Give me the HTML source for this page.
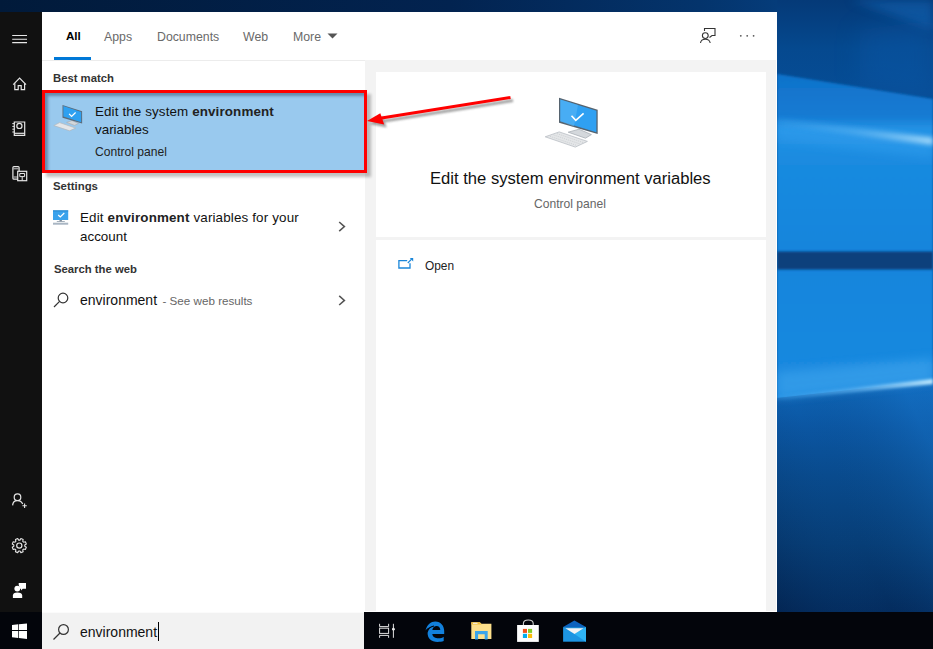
<!DOCTYPE html>
<html><head><meta charset="utf-8">
<style>
*{margin:0;padding:0;box-sizing:border-box}
html,body{width:933px;height:649px;overflow:hidden}
body{position:relative;font-family:"Liberation Sans",sans-serif;background:#0a4f8f}
.a{position:absolute}
#wall{left:0;top:0;width:933px;height:649px;background:linear-gradient(90deg,#011a3a 0px,#022350 450px,#04346c 700px,#053c7a 777px,#0a4a90 933px)}
#side{left:0;top:12px;width:42px;height:600px;background:#111111}
#panel{left:42px;top:12px;width:735px;height:600px;background:#fff}
#hdrline{left:42px;top:60px;width:323px;height:1px;background:#ececec}
#gcol{left:365px;top:60px;width:411px;height:551px;background:#f3f3f3}
#card1{left:376px;top:72px;width:390px;height:165px;background:#fff}
#card2{left:376px;top:240px;width:390px;height:371px;background:#fff}
#taskbar{left:0;top:612px;width:933px;height:37px;background:#03050b}
#search{left:42px;top:612px;width:322px;height:37px;background:#f2f2f2;border-top:1px solid #fbfbfb}
.t{position:absolute;white-space:nowrap;color:#000;line-height:1}
.g{color:#666}
b{font-weight:700;color:#222}
svg{position:absolute;overflow:visible}
</style></head><body>
<div id="wall" class="a"></div>

<svg style="left:777px;top:0" width="156" height="612" viewBox="777 0 156 612">
  <defs>
    <linearGradient id="gTop" x1="0" y1="0" x2="0" y2="1">
      <stop offset="0" stop-color="#053a78"/><stop offset="0.03" stop-color="#053f80"/><stop offset="0.08" stop-color="#05498f"/><stop offset="0.16" stop-color="#064d96"/><stop offset="1" stop-color="#0a56a2"/>
    </linearGradient>
    <linearGradient id="gMid" x1="0" y1="0" x2="0" y2="1">
      <stop offset="0" stop-color="#1072ca"/><stop offset="0.13" stop-color="#157bd3"/><stop offset="0.17" stop-color="#2592e4"/><stop offset="0.26" stop-color="#1a8be0"/><stop offset="0.55" stop-color="#1685dc"/><stop offset="1" stop-color="#1b8ae0"/>
    </linearGradient>
    <linearGradient id="gBot" x1="0" y1="0" x2="0" y2="1">
      <stop offset="0" stop-color="#0e66b8"/><stop offset="0.2" stop-color="#0b56a2"/><stop offset="0.4" stop-color="#094b8e"/><stop offset="0.7" stop-color="#073e77"/><stop offset="1" stop-color="#042c5e"/>
    </linearGradient>
    <linearGradient id="gDiag" x1="0" y1="1" x2="1" y2="0.3"><stop offset="0" stop-color="#021a40" stop-opacity="0.35"/><stop offset="0.5" stop-color="#0a4a8a" stop-opacity="0"/><stop offset="1" stop-color="#1a7ad0" stop-opacity="0.35"/></linearGradient>
    <linearGradient id="gBeam" x1="0" y1="0" x2="1" y2="0">
      <stop offset="0" stop-color="#4aaaf2" stop-opacity="0.2"/><stop offset="0.5" stop-color="#6cbcf6" stop-opacity="0.6"/><stop offset="1" stop-color="#c0eaff" stop-opacity="1"/>
    </linearGradient>
    <filter id="bl1" x="-10%" y="-100%" width="120%" height="300%"><feGaussianBlur stdDeviation="1.8"/></filter>
    <filter id="bl3" x="-10%" y="-100%" width="120%" height="300%"><feGaussianBlur stdDeviation="5"/></filter>
    <filter id="bl4" x="-100%" y="-100%" width="300%" height="300%"><feGaussianBlur stdDeviation="12"/></filter>
    <filter id="bl2" x="-10%" y="-100%" width="120%" height="300%"><feGaussianBlur stdDeviation="2.6"/></filter>
    <filter id="bl0" x="-10%" y="-10%" width="120%" height="120%"><feGaussianBlur stdDeviation="1"/></filter>
  </defs>
  <rect x="777" y="0" width="156" height="612" fill="url(#gTop)"/>
  <path d="M850 0 L933 0 L933 30 Z" fill="#1466b6" opacity="0.55" filter="url(#bl3)"/>
  <path d="M860 30 L933 20 L933 99 L860 87 Z" fill="#0b5cad" opacity="0.35" filter="url(#bl4)"/>
  <path d="M777 74 L933 99 L933 382 L777 399 Z" fill="url(#gMid)" filter="url(#bl0)"/>
  <path d="M777 398 L933 381 L933 612 L777 612 Z" fill="url(#gBot)"/>
  <path d="M777 398 L933 381 L933 612 L777 612 Z" fill="url(#gDiag)"/>
  <path d="M777 121 L933 141 L933 158 L777 140 Z" fill="#36a0f0" opacity="0.45" filter="url(#bl3)"/>
  <path d="M777 119 L933 137.5 L933 145 L777 125 Z" fill="url(#gBeam)" opacity="0.8" filter="url(#bl2)"/>
  <rect x="777" y="251.5" width="156" height="18" fill="#093f7c" filter="url(#bl0)"/>
  <path d="M777 372 L933 358 L933 382 L777 398 Z" fill="#45aaf0" opacity="0.5" filter="url(#bl3)"/>
  <path d="M777 396 L933 379 L933 384 L777 400 Z" fill="url(#gBeam)" filter="url(#bl1)"/>
</svg>
<div id="side" class="a"></div>
<div id="panel" class="a"></div>
<div id="hdrline" class="a"></div>
<div id="gcol" class="a"></div>
<div id="card1" class="a"></div>
<div id="card2" class="a"></div>
<div id="taskbar" class="a"></div>
<div id="search" class="a"></div>


<!-- sidebar icons -->
<svg style="left:0;top:0" width="1" height="1" fill="none" stroke="#e6e6e6" stroke-width="1.2">
  <path d="M12.2 35.5 H27 M12.2 39.3 H27 M12.2 42.6 H27" stroke-width="1.1"/>
  <path d="M13.2 84.6 L19.6 78.2 L26 84.6"/>
  <path d="M14.8 83.2 V89.6 H18.2 V85.6 H21.2 V89.6 H24.6 V83.2"/>
  <path d="M14.3 122 H24.7 V135.3 H14.3 Z"/>
  <path d="M14.3 133.3 H24.7"/>
  <circle cx="19.4" cy="125.9" r="2.6"/>
  <path d="M12.3 123.6 H14.3 M12.3 126.4 H14.3 M12.3 129.2 H14.3 M12.3 132 H14.3" stroke-width="1"/>
  <rect x="12.9" y="166.6" width="6.2" height="12.6" rx="1"/>
  <path d="M13.5 168.8 H18.5 M13.5 177 H18.5" stroke-width="0.9"/>
  <rect x="17.7" y="171.3" width="9" height="9.4" fill="#111"/>
  <path d="M19.8 173.5 H24.6 V176.6 H19.8 Z M22.2 176.6 V180.6" stroke-width="1"/>
  <circle cx="17.5" cy="497.2" r="3.3"/>
  <path d="M12.6 505.4 Q12.9 500.6 17.5 500.6 Q21.4 500.6 22.7 504"/>
  <path d="M24.6 503.6 V508 M22.4 505.8 H26.8" stroke-width="1.1"/>
  <circle cx="19.3" cy="545.6" r="2.6"/>
  <path d="M24.77 546.22 L26.32 547.19 L25.39 549.44 L23.60 549.03 L22.73 549.90 L23.14 551.69 L20.89 552.62 L19.92 551.07 L18.68 551.07 L17.71 552.62 L15.46 551.69 L15.87 549.90 L15.00 549.03 L13.21 549.44 L12.28 547.19 L13.83 546.22 L13.83 544.98 L12.28 544.01 L13.21 541.76 L15.00 542.17 L15.87 541.30 L15.46 539.51 L17.71 538.58 L18.68 540.13 L19.92 540.13 L20.89 538.58 L23.14 539.51 L22.73 541.30 L23.60 542.17 L25.39 541.76 L26.32 544.01 L24.77 544.98 Z" stroke-width="1.1" stroke-linejoin="round"/>
</svg>
<svg style="left:0;top:0" width="1" height="1" fill="#fff">
  <path d="M18.7 583 H26 V588.8 H22.8 L21 590.6 V588.8 H20 L18.7 585 Z"/>
  <circle cx="17.3" cy="588.6" r="2.9"/>
  <path d="M12.9 598 V595.6 Q12.9 592.6 17.3 592.6 Q22.2 592.6 22.2 595.6 V598 Z"/>
  <path d="M12 624.9 L18.2 624.3 V630.1 H12 Z M18.9 624.2 L27 623.6 V630.1 H18.9 Z M12 630.9 H18.2 V637.9 L12 637.3 Z M18.9 630.9 H27 V638.9 L18.9 638 Z"/>
</svg>

<!-- tabs -->
<div class="t" style="left:66px;top:30px;font-size:11.6px;font-weight:700">All</div>
<div class="t g" style="left:104px;top:30.5px;font-size:12.3px;color:#6a6a6a">Apps</div>
<div class="t g" style="left:157px;top:30.5px;font-size:12.3px;color:#6a6a6a">Documents</div>
<div class="t g" style="left:243px;top:30.5px;font-size:12.3px;color:#6a6a6a">Web</div>
<div class="t g" style="left:293px;top:30.5px;font-size:12.3px;color:#6a6a6a">More</div>
<svg style="left:0;top:0" width="1" height="1"><path d="M327.5 33.5 L337.5 33.5 L332.5 38.5 Z" fill="#555"/></svg>
<div class="a" style="left:54px;top:57px;width:37px;height:3px;background:#0078d7"></div>

<!-- top-right icons -->
<svg style="left:0;top:0" width="1" height="1" fill="none" stroke="#333" stroke-width="1.1">
  <path d="M704.5 31 V28.5 H715 V35.5 H712 L709.5 37.5"/>
  <circle cx="705.3" cy="35.6" r="2.9"/>
  <path d="M700.5 43 Q701 39.2 705.3 39.2 Q709.6 39.2 710.2 43"/>
  <circle cx="740.8" cy="35.8" r="0.9" fill="#555" stroke="none"/>
  <circle cx="747.2" cy="35.8" r="0.9" fill="#555" stroke="none"/>
  <circle cx="753.6" cy="35.8" r="0.9" fill="#555" stroke="none"/>
</svg>

<!-- left pane -->
<div class="t" style="left:53px;top:72.8px;font-size:11.3px;font-weight:700;color:#333">Best match</div>

<!-- selected item -->
<div class="a" style="left:45.5px;top:93.5px;width:325px;height:83px;background:rgba(0,0,0,0.24);filter:blur(1.4px)"></div>
<div class="a" style="left:42px;top:90px;width:325px;height:83px;border:3px solid #ff0000;background:#99c9ee;box-shadow:inset 3px 3px 3px rgba(40,60,90,0.45)"></div>
<div class="t" style="left:95px;top:105px;font-size:13.4px;letter-spacing:0.12px;color:#111">Edit the system <b>environment</b></div>
<div class="t" style="left:95px;top:123.4px;font-size:13.4px;color:#111">variables</div>
<div class="t" style="left:95px;top:146.4px;font-size:12.1px;color:#222">Control panel</div>

<div class="t" style="left:53px;top:180.6px;font-size:11.4px;font-weight:700;color:#333">Settings</div>
<div class="t" style="left:80px;top:211.4px;font-size:13.4px;letter-spacing:0.15px;color:#111">Edit <b>environment</b> variables for your</div>
<div class="t" style="left:80px;top:229.6px;font-size:13.4px;color:#111">account</div>
<svg style="left:0;top:0" width="1" height="1" fill="none" stroke="#555" stroke-width="1.55">
  <path d="M339.2 222 L344.4 226.6 L339.2 231.2"/>
  <path d="M339.2 295.8 L344.4 300.4 L339.2 305"/>
</svg>

<div class="t" style="left:54px;top:263.6px;font-size:11.3px;font-weight:700;color:#333">Search the web</div>
<div class="t" style="left:80px;top:292.6px;font-size:14px;color:#111">environment</div>
<div class="t g" style="left:162.5px;top:294.6px;font-size:11.65px">- See web results</div>
<svg style="left:0;top:0" width="1" height="1" fill="none" stroke="#333" stroke-width="1.2">
  <circle cx="63" cy="298" r="4.8"/>
  <path d="M59.6 301.4 L54 307"/>
</svg>

<!-- right pane -->
<div class="t" style="left:430px;top:170.7px;font-size:16.63px;color:#111">Edit the system environment variables</div>
<div class="t g" style="left:534px;top:197.6px;font-size:12.1px">Control panel</div>
<div class="t" style="left:425px;top:261.3px;font-size:11.9px;color:#222">Open</div>
<svg style="left:0;top:0" width="1" height="1" fill="none" stroke="#1a86d9" stroke-width="1.3">
  <path d="M407.2 260.7 H398.9 V268 H410 V263.2"/>
  <path d="M407.8 263 L411.6 259.2" stroke-width="1.2"/>
  <path d="M409.8 258 L413.2 258 L413.2 261.4 Z" fill="#1a86d9" stroke="none"/>
</svg>

<!-- search box -->
<div class="t" style="left:80px;top:625px;font-size:14px;color:#111">environment</div>
<div class="a" style="left:158px;top:622px;width:1px;height:19px;background:#000"></div>
<svg style="left:0;top:0" width="1" height="1" fill="none" stroke="#333" stroke-width="1.2">
  <circle cx="63.5" cy="629.5" r="4.9"/>
  <path d="M60 633 L53.5 639.5"/>
</svg>


<!-- result icons -->
<svg style="left:0;top:0" width="1" height="1">
  <!-- big monitor -->
  <path d="M545.2 136.8 L559.2 131.9 L587.4 141.4 L575.3 147.1 Z" fill="#e4e6e8" stroke="#b9bec4" stroke-width="0.8"/>
  <path d="M550 136.3 L576 145.2 M553.5 134.9 L579.5 143.8 M557 133.6 L583 142.5" stroke="#c4c8cc" stroke-width="0.7" stroke-dasharray="1.2 1"/>
  <path d="M568.2 132.2 L579 129.2 L591.4 134.6 L585.5 138.2 Z" fill="#d4d8dc" stroke="#aab0b6" stroke-width="0.8"/>
  <path d="M559 97.7 L597.7 109.8 L597.7 134 L559 122.8 Z" fill="#56636f"/>
  <path d="M560.3 99.5 L596.4 110.8 L596.4 132.2 L560.3 121.3 Z" fill="#2fa0f2"/>
  <path d="M560.3 99.5 L578 105 L574 126.4 L560.3 121.3 Z" fill="#5cb8f6" opacity="0.55"/>
  <path d="M571.5 115.7 L575.8 120.4 L583.6 113.3" fill="none" stroke="#fff" stroke-width="1.6"/>
  <!-- small monitor -->
  <path d="M53.8 125.6 L59.6 122.6 L75.7 128.1 L69.6 130.8 Z" fill="#e3e6e9" stroke="#b0b6bc" stroke-width="0.7"/>
  <path d="M66.6 122.4 L72 120.6 L78.5 123.4 L74.6 125.4 Z" fill="#d3d7db" stroke="#a8aeb4" stroke-width="0.7"/>
  <path d="M62.5 104.9 L82.1 111.3 L82.1 123.5 L62.5 117.7 Z" fill="#5d6b78"/>
  <path d="M63.4 106.1 L81.2 112 L81.2 122.2 L63.4 116.6 Z" fill="#2ea0f0"/>
  <path d="M69.1 113.8 L71.6 116.5 L75.6 112.5" fill="none" stroke="#fff" stroke-width="1.2"/>
  <!-- settings monitor -->
  <rect x="53" y="210.4" width="15.2" height="9.6" fill="#3aa2ec"/>
  <rect x="53" y="210.4" width="15.2" height="1" fill="#2a86cc"/>
  <path d="M58.2 215 L60.3 217 L64.3 213" fill="none" stroke="#fff" stroke-width="1.2"/>
  <rect x="59.5" y="220" width="2.4" height="1.4" fill="#7f8e9c"/>
  <rect x="56.8" y="221.2" width="8" height="0.8" fill="#8f9dab"/>
  <rect x="53" y="222.7" width="15.2" height="2" fill="#a9b6c3"/>
</svg>

<!-- red arrow -->
<svg style="left:0;top:0" width="1" height="1">
  <defs><filter id="sh" x="-20%" y="-50%" width="140%" height="200%"><feGaussianBlur stdDeviation="1.3"/></filter></defs>
  <g transform="translate(2.5,3)" filter="url(#sh)" opacity="0.45">
    <path d="M510.5 97.5 L380 118.3" stroke="#333" stroke-width="3"/>
    <path d="M367 121 L380.3 113.3 L384.2 124.6 Z" fill="#333"/>
  </g>
  <path d="M510.5 97.5 L380 118.3" stroke="#ff0000" stroke-width="3"/>
  <path d="M367 121 L380.3 113.3 L384.2 124.6 Z" fill="#ff0000"/>
</svg>

<!-- taskbar icons -->
<svg style="left:0;top:0" width="1" height="1">
  <g fill="none" stroke="#e0e0e0" stroke-width="1">
    <path d="M379.6 623.8 V626.6 H388.6 V623.8"/>
    <rect x="379.6" y="628.2" width="9" height="5.2"/>
    <path d="M379.6 637.8 V635.4 H388.6 V637.8"/>
    <path d="M393.4 623.8 V637.8"/>
  </g>
  <circle cx="393.4" cy="629.2" r="1.4" fill="#e8e8e8"/>
  <!-- edge -->
  <path d="M425.5 630.5 C427 624.5 431 621.5 435.2 621.5 C441 621.5 444.2 626 444.2 631 V633.9 H432.3 C432.6 636.8 435.5 638.3 438.5 638.3 C440.5 638.3 442.5 637.6 443.7 636.7 V641.1 C441.9 641.8 439.8 642 437.6 642 C431.2 642 427.6 638 427.6 633.2 C427.6 630.5 428.7 628.4 430.8 626.8 C428.6 627.6 426.6 629 425.5 630.5 Z" fill="#1280dc"/>
  <path d="M432.3 629.9 C432.7 627.5 434.6 626 436.6 626 C438.7 626 440.1 627.5 440.3 629.9 Z" fill="#03050b"/>
  <path d="M427.2 632 C428.2 628.6 430.6 626.6 434 626" fill="none" stroke="#03050b" stroke-width="1.1"/>
  <!-- folder -->
  <path d="M471.3 622.2 H479.8 L481.6 623.8 H491.4 V638.9 H471.3 Z" fill="#fde08c"/>
  <path d="M471.3 622.2 H479.8 L481.6 624.5 H471.3 Z" fill="#efbd3c"/>
  <rect x="473" y="622.8" width="4.5" height="1.1" fill="#f6f0e0"/>
  <path d="M475 639.6 V631 H487.7 V639.6 H484.7 V634.3 H478.1 V639.6 Z" fill="#3aa5ea"/>
  <!-- store -->
  <path d="M523.4 625.5 V623.5 C523.4 621.3 525.4 620 528.3 620 C531.2 620 533.2 621.3 533.2 623.5 V625.5" fill="none" stroke="#cfcfcf" stroke-width="1.1"/>
  <rect x="517.1" y="625" width="21.7" height="16.9" fill="#fdfdfd"/>
  <rect x="522.9" y="628.9" width="4.1" height="4" fill="#f1511b"/>
  <rect x="528" y="628.9" width="4.1" height="4" fill="#80cc28"/>
  <rect x="522.9" y="633.8" width="4.1" height="4.2" fill="#00adef"/>
  <rect x="528" y="633.8" width="4.1" height="4.2" fill="#fbbc09"/>
  <!-- mail -->
  <path d="M563.1 627.1 L574.4 620.6 L586 627.1 Z" fill="#0c62bd"/>
  <path d="M563.1 627.1 H586 V641.7 H563.1 Z" fill="#1d95e2"/>
  <path d="M574.4 634 L586 627.1 V641.7 Z" fill="#2fb4f4"/>
  <path d="M565.4 628.2 H583.6 L574.5 633.9 Z" fill="#f4f4f4"/>
</svg>

</body></html>
